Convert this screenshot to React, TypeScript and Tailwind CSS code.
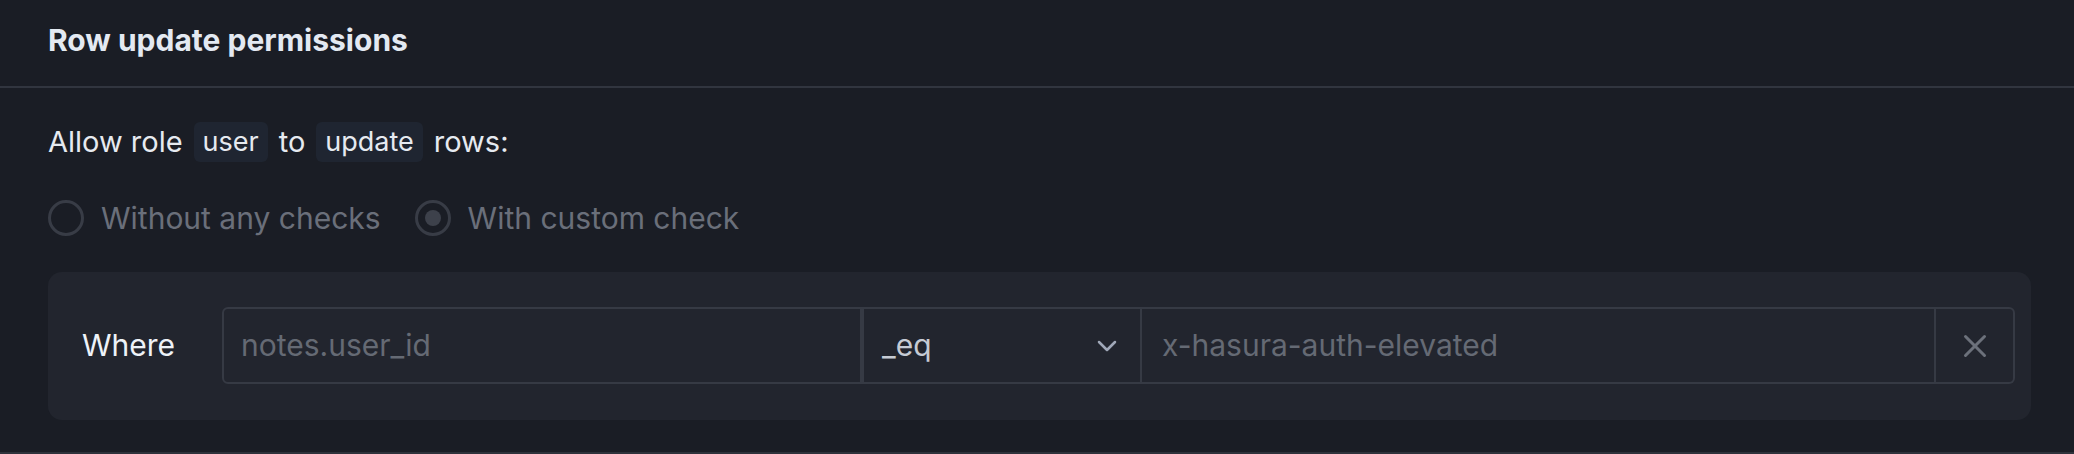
import { X, ChevronDown } from 'lucide-react';

function Chip({ children }: { children: React.ReactNode }) {
  return (
    <span className="flex h-[40px] items-center rounded-[6px] bg-[#1f2531] px-[9px] text-[27px]">
      {children}
    </span>
  );
}

function Radio({ label, checked }: { label: string; checked?: boolean }) {
  return (
    <label className="flex items-center gap-[17px]">
      <span className="flex h-[36px] w-[36px] items-center justify-center rounded-full border-[3px] border-[#383c46]">
        {checked && <span className="h-[16px] w-[16px] rounded-full bg-[#3d414b]" />}
      </span>
      <span className="text-[30px] text-[#6a6f7a]">{label}</span>
    </label>
  );
}

export default function App() {
  return (
    <div className="h-[454px] border-b-2 border-[#2e323b] bg-[#1a1d25] font-['Inter',sans-serif]">
      {/* header */}
      <div className="flex h-[88px] items-center border-b-2 border-[#31353f] px-[48px] pb-[6px]">
        <h2 className="text-[30px] font-bold text-[#e3e9f2]">Row update permissions</h2>
      </div>

      <div className="pl-[48px] pr-[43px]">
        <div className="mt-[34px] flex h-[40px] items-center gap-[11px] text-[29px] text-[#e6eaf0]">
          <span>Allow role</span>
          <Chip>user</Chip>
          <span>to</span>
          <Chip>update</Chip>
          <span>rows:</span>
        </div>

        <div className="mt-[38px] flex h-[36px] items-center gap-[34px]">
          <Radio label="Without any checks" />
          <Radio label="With custom check" checked />
        </div>

        <div className="mt-[36px] flex items-center rounded-[14px] bg-[#22252e] pt-[35px] pb-[36px] pl-[34px] pr-[16px]">
          <span className="w-[140px] text-[30px] text-[#eef2f8]">Where</span>
          <div className="flex h-[77px] flex-1 items-stretch">
            <div className="flex w-[640px] items-center rounded-l-[6px] border-2 border-[#363a44] pl-[17px] text-[30px] text-[#656a74]">
              notes.user_id
            </div>
            <div className="flex w-[280px] items-center justify-between border-2 border-[#363a44] pl-[18px] pr-[17px] text-[30px] text-[#c6cbd4]">
              <span>_eq</span>
              <ChevronDown className="h-[32px] w-[32px] text-[#a0a8b8]" strokeWidth={1.9} />
            </div>
            <div className="flex flex-1 items-center border-y-2 border-r-2 border-[#363a44] pl-[20px] text-[30px] text-[#656a74]">
              x-hasura-auth-elevated
            </div>
            <div className="flex w-[79px] items-center justify-center rounded-r-[6px] border-y-2 border-r-2 border-[#363a44]">
              <X className="h-[38px] w-[38px] text-[#6c717b]" strokeWidth={1.9} />
            </div>
          </div>
        </div>
      </div>
    </div>
  );
}
